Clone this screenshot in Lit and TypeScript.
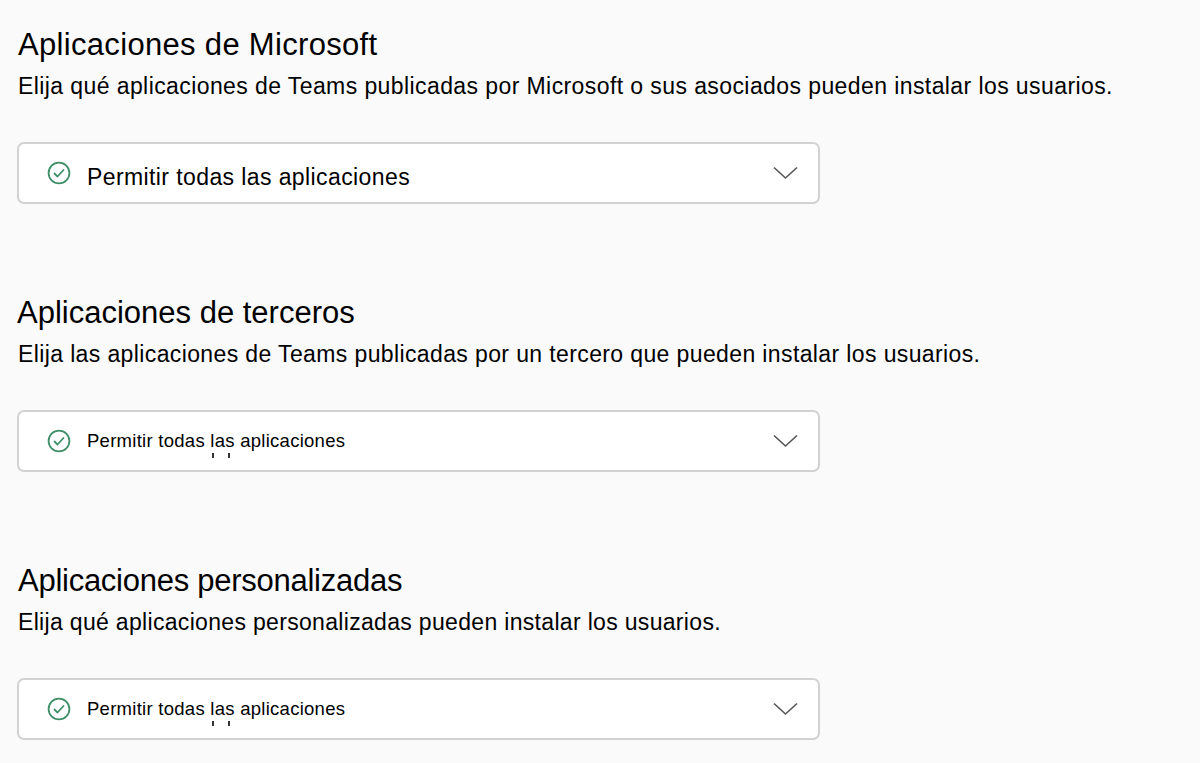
import { LitElement, html, css } from "lit";
import { customElement } from "lit/decorators.js";

const sections = [
  { title: "Aplicaciones de Microsoft", track: 0.32, indent: 1, descTrack: 0.41, desc: "Elija qué aplicaciones de Teams publicadas por Microsoft o sus asociados pueden instalar los usuarios.", big: true },
  { title: "Aplicaciones de terceros", track: 0, indent: 0, descTrack: 0.38, desc: "Elija las aplicaciones de Teams publicadas por un tercero que pueden instalar los usuarios.", big: false },
  { title: "Aplicaciones personalizadas", track: -0.26, indent: 1, descTrack: 0.32, desc: "Elija qué aplicaciones personalizadas pueden instalar los usuarios.", big: false },
];

@customElement("app-root")
export class AppRoot extends LitElement {
  static styles = css`
    :host { display: block; width: 1200px; height: 763px; overflow: hidden; background: #fafafa; color: #000; font-family: "Liberation Sans", Arial, sans-serif; }
    .page { display: flex; flex-direction: column; gap: 88px; padding: 24px 0 0 17px; }
    section { display: flex; flex-direction: column; }
    h2 { margin: 0; font-size: 31px; font-weight: 400; line-height: 42px; }
    p { margin: 0 0 38px 1px; font-size: 23px; line-height: 40px; height: 38px; }
    .select { position: relative; box-sizing: border-box; width: 803px; height: 62px; display: flex; align-items: center; padding: 0 20px 0 28px; background: #fff; border: 2px solid #d2d2d2; border-radius: 7px; }
    .check { width: 24px; height: 24px; flex: none; margin: 0 16px 0 0; }
    .label { flex: 1; font-size: 18.5px; letter-spacing: 0.27px; position: relative; }
    .label.big { font-size: 23px; letter-spacing: 0.4px; padding-top: 8px; }
    .chev { width: 26px; height: 16px; flex: none; }
    .tick { position: absolute; top: 23px; width: 2px; height: 5px; background: #333; }
  `;

  render() {
    return html`<div class="page">
      ${sections.map(s => html`<section>
        <h2 style="letter-spacing:${s.track}px;margin-left:${s.indent}px">${s.title}</h2>
        <p style="letter-spacing:${s.descTrack}px">${s.desc}</p>
        <div class="select">
          <svg class="check" viewBox="0 0 24 24" fill="none" stroke="#3f8f68" stroke-width="1.8"><circle cx="12" cy="12" r="10.4"/><path d="M7.5 12.5l3 3 6-6.5" stroke-linecap="round" stroke-linejoin="round"/></svg>
          <span class="label ${s.big ? "big" : ""}">Permitir todas las aplicaciones${s.big ? "" : html`<i class="tick" style="left:125px"></i><i class="tick" style="left:141px"></i>`}</span>
          <svg class="chev" viewBox="0 0 26 16" fill="none" stroke="#555" stroke-width="1.6"><path d="M2 2.5L13.5 13 25 2.5"/></svg>
        </div>
      </section>`)}
    </div>`;
  }
}
